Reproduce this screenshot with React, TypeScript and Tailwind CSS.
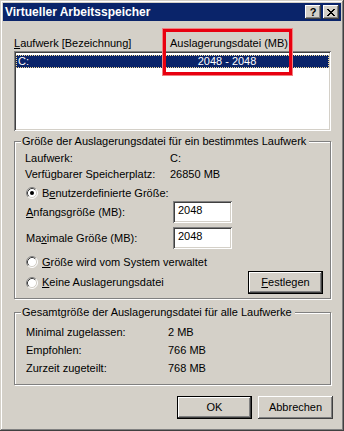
import React from "react";

const raised =
  "shadow-[inset_-1px_-1px_#404040,inset_1px_1px_#ffffff,inset_-2px_-2px_#808080,inset_2px_2px_#d4d0c8]";
const sunken =
  "shadow-[inset_1px_1px_#808080,inset_-1px_-1px_#ffffff,inset_2px_2px_#404040,inset_-2px_-2px_#d4d0c8]";

const Radio = ({ checked }: { checked?: boolean }) => (
  <svg width="12" height="12" viewBox="0 0 12 12" className="shrink-0">
    <circle cx="6" cy="6" r="5" fill="#ffffff" />
    <path d="M2.11 9.89 A5.5 5.5 0 0 1 9.89 2.11" stroke="#808080" fill="none" />
    <path d="M9.89 2.11 A5.5 5.5 0 0 1 2.11 9.89" stroke="#ffffff" fill="none" />
    <path d="M2.82 9.18 A4.5 4.5 0 0 1 9.18 2.82" stroke="#404040" fill="none" />
    <path d="M9.18 2.82 A4.5 4.5 0 0 1 2.82 9.18" stroke="#d4d0c8" fill="none" />
    {checked && <circle cx="6" cy="6" r="2" fill="#000000" />}
  </svg>
);

const Group = ({
  title,
  className,
  children,
}: {
  title: string;
  className?: string;
  children: React.ReactNode;
}) => (
  <div
    className={`flex flex-col border border-[#808080] shadow-[inset_1px_1px_#ffffff,1px_1px_#ffffff] ${className}`}
  >
    <span className="-mt-[7px] ml-[6px] self-start h-[13px] leading-[13px] bg-[#d4d0c8] pl-[1px] pr-[3px]">
      {title}
    </span>
    {children}
  </div>
);

const Field = ({ value }: { value: string }) => (
  <div
    className={`w-[59px] h-[22px] bg-white pl-[5px] pt-[3px] leading-[13px] ${sunken}`}
  >
    {value}
  </div>
);

const App = () => {
  return (
    <div
      className="relative w-[344px] h-[431px] bg-[#d4d0c8] p-[3px] flex flex-col text-[11px] text-black shadow-[inset_-1px_-1px_#404040,inset_1px_1px_#d4d0c8,inset_-2px_-2px_#808080,inset_2px_2px_#ffffff]"
      style={{ fontFamily: '"Liberation Sans", Arial, sans-serif' }}
    >
      {/* title bar */}
      <div className="h-[18px] bg-[#0a246a] flex items-center pl-[2px] pr-[2px]">
        <span className="text-white font-bold text-[12px] leading-[18px] flex-1">
          Virtueller Arbeitsspeicher
        </span>
        <div className={`w-[16px] h-[14px] bg-[#d4d0c8] flex items-center justify-center font-bold text-[11px] leading-none ${raised}`}>
          ?
        </div>
        <div className={`ml-[2px] w-[16px] h-[14px] bg-[#d4d0c8] flex items-center justify-center ${raised}`}>
          <svg width="8" height="7" viewBox="0 0 8 7">
            <path d="M0 0h2v1h1v1h2v-1h1v-1h2v1h-1v1h-1v1h-1v1h1v1h1v1h1v1h-2v-1h-1v-1h-2v1h-1v1h-2v-1h1v-1h1v-1h1v-1h-1v-1h-1v-1h-1z" fill="#000000" />
          </svg>
        </div>
      </div>

      {/* content */}
      <div className="flex flex-col pl-[11px] pr-[10px] pt-[16px]">
        <div className="flex h-[13px] leading-[13px]">
          <span className="w-[156px]">
            <u>L</u>aufwerk [Bezeichnung]
          </span>
          <span>Auslagerungsdatei (MB)</span>
        </div>

        <div className={`mt-[1px] h-[80px] bg-white pt-[4px] px-[2px] ${sunken}`}>
          <div className="flex h-[13px] leading-[11px] bg-[#0a246a] text-white border border-dotted border-[#f5db95]">
            <span className="w-[146px] pl-[1px]">C:</span>
            <span className="w-[128px] text-center">2048 - 2048</span>
          </div>
        </div>

        <Group
          title="Größe der Auslagerungsdatei für ein bestimmtes Laufwerk"
          className="mt-[10px] pb-[4px]"
        >
          <div className="mt-[2px] flex items-center h-[16px] pl-[10px]">
            <span className="w-[145px]">Laufwerk:</span>
            <span>C:</span>
          </div>
          <div className="flex items-center h-[16px] pl-[10px]">
            <span className="w-[145px]">Verfügbarer Speicherplatz:</span>
            <span>26850 MB</span>
          </div>
          <div className="mt-[3px] flex items-center h-[16px] pl-[11px] gap-[4px]">
            <Radio checked />
            <span>
              B<u>e</u>nutzerdefinierte Größe:
            </span>
          </div>
          <div className="flex items-center h-[22px] pl-[11px]">
            <span className="w-[147px]">
              <u>A</u>nfangsgröße (MB):
            </span>
            <Field value="2048" />
          </div>
          <div className="mt-[4px] flex items-center h-[22px] pl-[11px]">
            <span className="w-[147px]">
              Ma<u>x</u>imale Größe (MB):
            </span>
            <Field value="2048" />
          </div>
          <div className="mt-[5px] flex items-center h-[16px] pl-[11px] gap-[4px]">
            <Radio />
            <span>
              <u>G</u>röße wird vom System verwaltet
            </span>
          </div>
          <div className="mt-[1px] flex items-center h-[23px] pl-[11px] pr-[7px]">
            <Radio />
            <span className="ml-[4px] flex-1">
              <u>K</u>eine Auslagerungsdatei
            </span>
            <div
              className={`w-[75px] h-[23px] border border-black flex items-center justify-center ${raised}`}
            >
              <span>
                <u>F</u>estlegen
              </span>
            </div>
          </div>
        </Group>

        <Group
          title="Gesamtgröße der Auslagerungsdatei für alle Laufwerke"
          className="mt-[13px] pb-[7px]"
        >
          <div className="mt-[4px] flex items-center h-[18px] pl-[11px]">
            <span className="w-[142px]">Minimal zugelassen:</span>
            <span>2 MB</span>
          </div>
          <div className="flex items-center h-[18px] pl-[11px]">
            <span className="w-[142px]">Empfohlen:</span>
            <span>766 MB</span>
          </div>
          <div className="flex items-center h-[18px] pl-[11px]">
            <span className="w-[142px]">Zurzeit zugeteilt:</span>
            <span>768 MB</span>
          </div>
        </Group>

        <div className="mt-[11px] -mr-[2px] flex justify-end gap-[6px]">
          <div
            className={`w-[75px] h-[23px] border border-black flex items-center justify-center ${raised}`}
          >
            OK
          </div>
          <div className={`w-[75px] h-[23px] flex items-center justify-center ${raised}`}>
            Abbrechen
          </div>
        </div>
      </div>

      {/* red highlight drawn over the dialog */}
      <div className="absolute left-[163px] top-[29px] w-[129px] h-[46px] border-[3px] border-[#e80010] outline outline-1 outline-[#f08080]" />
    </div>
  );
};

export default App;
